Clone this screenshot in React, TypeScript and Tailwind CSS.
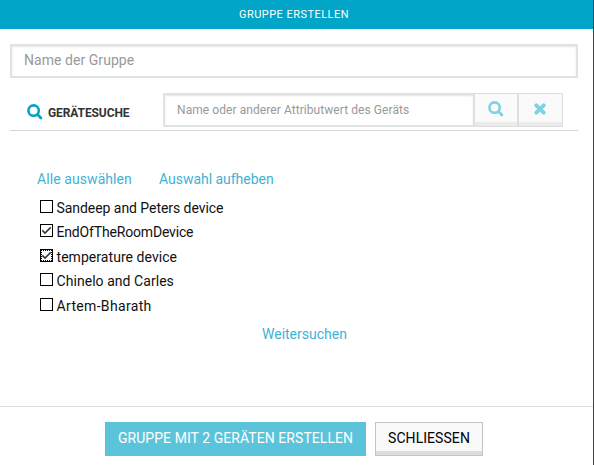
import React from "react";

const devices = [
  { name: "Sandeep and Peters device", state: "off", row: "h-6", text: "tracking-[-0.05px]" },
  { name: "EndOfTheRoomDevice", state: "on", row: "h-[25px]", text: "tracking-[-0.17px]" },
  { name: "temperature device", state: "focus", row: "h-6", text: "tracking-[0.05px]" },
  { name: "Chinelo and Carles", state: "off", row: "h-[25px]", text: "tracking-[0.05px]" },
  { name: "Artem-Bharath", state: "off", row: "h-6", text: "tracking-[0.33px]" },
];

function SearchIcon({ className }: { className: string }) {
  return (
    <svg className={className} width="16" height="16" viewBox="0 0 16 16" fill="none" stroke="currentColor">
      <circle cx="6.6" cy="6.6" r="5.2" strokeWidth="2.6" />
      <path d="M10.6 10.6L13.9 13.9" strokeWidth="2.8" strokeLinecap="round" />
    </svg>
  );
}

function CheckBox({ state }: { state: string }) {
  return (
    <svg className="shrink-0" width="13" height="13" viewBox="0 0 13 13" fill="none">
      <rect x="0.5" y="0.5" width="12" height="12" stroke="#000" />
      {state === "focus" && (
        <path
          d="M1 1.5H12M1 11.5H12M1.5 1V12M11.5 1V12"
          stroke="#000"
          strokeDasharray="1 1"
          shapeRendering="crispEdges"
        />
      )}
      {state !== "off" && <path d="M2.3 6.4L5 9.1L10.7 3.4" stroke="#333" strokeWidth="1.5" />}
    </svg>
  );
}

export default function App() {
  return (
    <div className="flex h-[465px] w-[594px] flex-col overflow-hidden border-r border-[#444] bg-white font-['Roboto',sans-serif]">
      <header className="flex h-[29px] shrink-0 items-center justify-center bg-[#00a5c8] pr-[5px] pt-px text-[11px] tracking-[0.47px] text-white">
        <span className="whitespace-nowrap">GRUPPE ERSTELLEN</span>
      </header>

      <main className="h-[377px] shrink-0 pt-[15px]">
        <div className="ml-[10px] w-[568px]">
          <input
            className="block h-[34px] w-full border-2 border-[#dfe4e3] px-3 pb-0.5 text-[14px] tracking-[0.05px] shadow-[inset_0_1px_2px_#e4e4e4] outline-none placeholder:text-[#999]"
            placeholder="Name der Gruppe"
          />
          <div className="mt-[15px] flex h-[38px] border-b border-[#d5d7d7]">
            <div className="flex h-[38px] w-[153px] items-center pl-[17px] text-[#333]">
              <SearchIcon className="text-[#00a5c8]" />
              <span className="ml-[5px] pt-0.5 text-[12px] font-bold tracking-[-0.1px]">GERÄTESUCHE</span>
            </div>
            <input
              className="h-[34px] w-[311px] border-2 border-r border-[#dfe4e3] px-3 pb-px text-[12px] tracking-[0.07px] shadow-[inset_0_1px_2px_#e4e4e4] outline-none placeholder:text-[#999]"
              placeholder="Name oder anderer Attributwert des Geräts"
            />
            <button className="flex h-[34px] w-[44px] items-center justify-center border border-[#dedede] bg-[#fafafa] pb-[2px] text-[#7dd2e2] shadow-[inset_0_-4px_0_#ebebeb]">
              <SearchIcon className="" />
            </button>
            <button className="flex h-[34px] w-[45px] items-center justify-center border border-[#dedede] bg-[#fafafa] pb-[2px] pr-px text-[#7dd2e2] shadow-[inset_0_-4px_0_#ebebeb]">
              <svg width="12" height="12" viewBox="0 0 12 12" stroke="currentColor" strokeWidth="3.8" strokeLinecap="round">
                <path d="M2.3 2.3L9.7 9.7M9.7 2.3L2.3 9.7" />
              </svg>
            </button>
          </div>
        </div>

        <div className="mt-[38px] flex h-5 items-center gap-[27px] pl-[37px] pt-px text-[14px] text-[#3fb2d5]">
          <a className="w-[95px] whitespace-nowrap tracking-[0.08px]">Alle auswählen</a>
          <a className="whitespace-nowrap tracking-[-0.03px]">Auswahl aufheben</a>
        </div>

        <ul className="mt-[11px] pl-10 text-[14px] text-[#111]">
          {devices.map((d) => (
            <li key={d.name} className={`flex items-start gap-[3.5px] ${d.row}`}>
              <CheckBox state={d.state} />
              <span className={`whitespace-nowrap leading-4 ${d.text}`}>{d.name}</span>
            </li>
          ))}
        </ul>

        <div className="mt-[2px] flex h-5 items-center pl-[262px] pt-px text-[14px] text-[#3fb2d5]">
          <a className="whitespace-nowrap">Weitersuchen</a>
        </div>
      </main>

      <footer className="flex h-[59px] shrink-0 gap-[9px] border-t border-[#dedede] pl-[105px] pt-[15px] text-[14px]">
        <button className="h-[34px] w-[261px] whitespace-nowrap bg-[#5bc4da] pb-0.5 tracking-[0.06px] text-white">
          GRUPPE MIT 2 GERÄTEN ERSTELLEN
        </button>
        <button className="h-[34px] w-[108px] whitespace-nowrap border border-[#c4c4c4] bg-[#f9f9f9] pb-0.5 tracking-[0.06px] text-black shadow-[inset_0_-4px_0_#dcdcdc]">
          SCHLIESSEN
        </button>
      </footer>
    </div>
  );
}
